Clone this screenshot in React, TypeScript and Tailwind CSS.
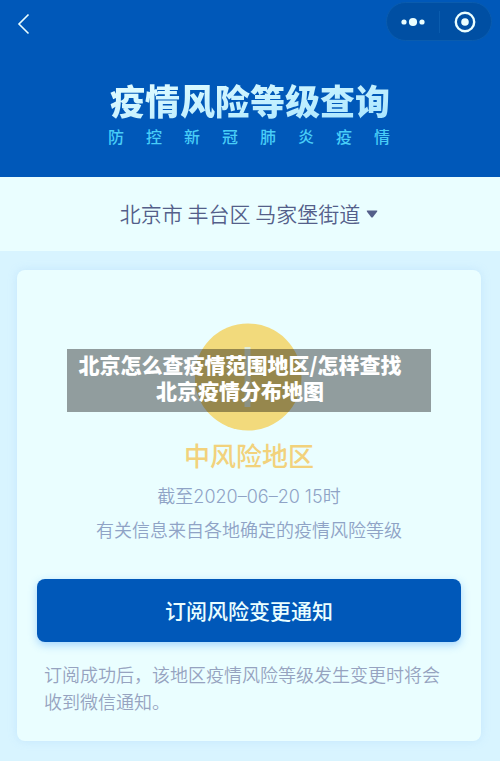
// src/App.tsx
import React from 'react';

const SUBTITLE = '防控新冠肺炎疫情';

// ============================================================================
//  TOP BAR (back button + mini program capsule)
// ============================================================================
function TopBar() {
    return (
        <div className="flex items-start justify-between pt-[2px] pl-[17px] pr-[8px]">
            <button aria-label="返回" className="mt-[11px] text-[#eafeff]">
                <svg width="13" height="22" viewBox="0 0 13 22" fill="none" stroke="currentColor" strokeWidth="1.6">
                    <path d="M11.5 1.5 L2 11 L11.5 20.5" />
                </svg>
            </button>
            <div className="flex items-center h-[39px] w-[106px] rounded-full bg-[#004fa3] border border-[#0a5cae]">
                <button aria-label="更多" className="flex-1 flex justify-center text-[#eafeff]">
                    <svg width="24" height="10" viewBox="0 0 24 10" fill="currentColor">
                        <circle cx="3" cy="5" r="2.6" />
                        <circle cx="12" cy="5" r="4.1" />
                        <circle cx="21" cy="5" r="2.6" />
                    </svg>
                </button>
                <span className="w-px h-[22px] bg-[#0a5cae]" />
                <button aria-label="关闭" className="flex-1 flex justify-center text-[#eafeff]">
                    <svg width="22" height="22" viewBox="0 0 22 22" fill="none">
                        <circle cx="11" cy="11" r="9.2" stroke="currentColor" strokeWidth="2.4" />
                        <circle cx="11" cy="11" r="3.8" fill="currentColor" />
                    </svg>
                </button>
            </div>
        </div>
    );
}

// ============================================================================
//  RISK CARD
// ============================================================================
function RiskCard() {
    return (
        <section className="relative rounded-lg bg-[#eafeff] px-5 pt-[53px] pb-[26px] shadow-[0_0_8px_rgba(160,205,245,0.35)]">
            <svg className="mx-auto block" width="108" height="108" viewBox="0 0 108 108">
                <circle cx="53" cy="54" r="53.5" fill="#f2da7c" />
                <rect x="49.5" y="24" width="6" height="60" fill="#dcf0f0" fillOpacity="0.8" />
            </svg>

            {/* Caption strip laid over the icon */}
            <div className="absolute top-[79px] inset-x-[50px] h-[63px] bg-black/38 pt-[2px] pr-[18px] text-center text-[21px] leading-[26px] font-black text-white whitespace-nowrap">
                北京怎么查疫情范围地区/怎样查找
                <br />
                北京疫情分布地图
            </div>

            <div className="text-center">
                <h2 className="mt-[7px] text-[26px] leading-[34px] font-medium text-[#f2d27c]">中风险地区</h2>
                <p className="mt-[8px] font-[Inter,'Noto_Sans_CJK_SC',sans-serif] text-[18px] leading-[33px] font-[350] text-[#8fa3c6]">截至2020–06–20 15时</p>
                <p className="text-[18px] leading-[33px] font-[350] text-[#8fa3c6]">有关信息来自各地确定的疫情风险等级</p>
            </div>

            <button className="mt-[33px] w-full h-[63px] rounded-lg bg-[#0058b9] text-[21px] font-medium text-[#eafeff] shadow-[0_3px_8px_rgba(80,165,250,0.45)]">
                订阅风险变更通知
            </button>
            <p className="mt-[19px] px-[7px] text-[18px] leading-[27px] font-[350] text-[#96a3c0]">
                订阅成功后，该地区疫情风险等级发生变更时将会收到微信通知。
            </p>
        </section>
    );
}

export default function App() {
    return (
        <div className="min-h-screen bg-[#d8f4ff] font-['Noto_Sans_CJK_SC',sans-serif]">
            <header className="h-[177px] bg-[#0058b9]">
                <TopBar />
                <h1 className="mt-[39px] text-center text-[35px] leading-[40px] font-black">
                    <span className="bg-linear-to-br from-[#e8ffff] to-[#a5e4ff] bg-clip-text text-transparent">疫情风险等级查询</span>
                </h1>
                <p className="mt-[5px] flex justify-center gap-[22px] pr-[2px] text-[16px] leading-[22px] font-medium text-[#48cdf7]">
                    {SUBTITLE.split('').map((char, i) => (
                        <span key={i}>{char}</span>
                    ))}
                </p>
            </header>

            <button className="flex w-full h-[74px] items-center justify-center gap-[6px] bg-[#eafeff] pr-[2px] text-[21px] font-[350] text-[#545f8a]">
                北京市 丰台区 马家堡街道
                <svg width="12" height="8" viewBox="0 0 12 8" fill="currentColor">
                    <path d="M1.5 0.5 H10.5 Q12 0.5 11 1.8 L7 7 Q6 8 5 7 L1 1.8 Q0 0.5 1.5 0.5 Z" />
                </svg>
            </button>

            <main className="pt-[19px] pl-[17px] pr-[19px]">
                <RiskCard />
            </main>
        </div>
    );
}
